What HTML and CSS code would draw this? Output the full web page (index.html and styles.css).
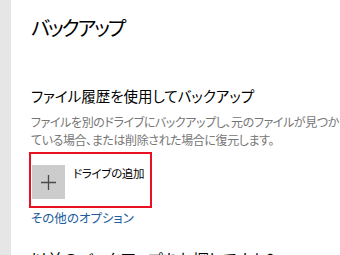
FILE: index.html
```html
<!DOCTYPE html>
<html lang="ja">
<head>
<meta charset="utf-8">
<link rel="stylesheet" href="styles.css">
</head>
<body>
<div class="page">
  <div class="rail"></div>
  <main class="main">
    <h1 class="title">バックアップ</h1>
    <h2 class="section">ファイル履歴を使用してバックアップ</h2>
    <p class="desc"><span class="line">ファイルを別のドライブにバックアップし、元のファイルが見つからなくなっ</span><span class="line">ている場合、または削除された場合に復元します。</span></p>
    <div class="addbox">
      <div class="plus">
        <svg width="15" height="15" viewBox="0 0 15 15"><path d="M7.5 0V15M0 7.5H15" stroke="#4a4a4a" stroke-width="1.3"/></svg>
      </div>
      <span class="addlabel">ドライブの追加</span>
    </div>
    <a class="more">その他のオプション</a>
    <h2 class="section prev">以前のバックアップをお探しですか?</h2>
  </main>
</div>
</body>
</html>
```
FILE: styles.css
```css
html, body {
  margin: 0;
  padding: 0;
  background: #fff;
  overflow: hidden;
  width: 340px;
  height: 255px;
}
body {
  font-family: "Noto Sans CJK JP", "Noto Sans", sans-serif;
  font-feature-settings: "palt";
  color: #000;
}
.page {
  display: flex;
  height: 255px;
  overflow: hidden;
}
.rail {
  width: 11px;
  flex: none;
  background: #e6e6e6;
}
.main {
  padding-left: 20px;
  flex: 1;
  min-width: 0;
  overflow: hidden;
}
.title {
  margin: 14px 0 0;
  font-size: 20px;
  font-weight: 400;
  letter-spacing: -2px;
  line-height: 28px;
}
.section {
  margin: 44px 0 0;
  font-size: 14.5px;
  font-weight: 400;
  line-height: 20px;
  white-space: nowrap;
}
.desc {
  margin: 7px 0 0;
  font-size: 12px;
  letter-spacing: -0.4px;
  line-height: 18px;
  color: #767676;
}
.line {
  display: block;
  white-space: nowrap;
}
.addbox {
  margin: 3px 0 0 -2px;
  width: 118px;
  height: 41px;
  border: 2px solid #e81123;
  display: flex;
  align-items: flex-start;
  padding: 11px 0 0 1px;
}
.plus {
  width: 33px;
  height: 34px;
  background: #cccccc;
  display: flex;
  align-items: center;
  justify-content: center;
  flex: none;
}
.addlabel {
  margin-left: 8px;
  margin-top: 0;
  font-size: 11.5px;
  letter-spacing: -0.3px;
  line-height: 16px;
  white-space: nowrap;
}
.more {
  display: block;
  margin-top: 1px;
  font-size: 12.5px;
  line-height: 18px;
  color: #215d9c;
}
.prev {
  margin-top: 22px;
  font-size: 16px;
}
```
